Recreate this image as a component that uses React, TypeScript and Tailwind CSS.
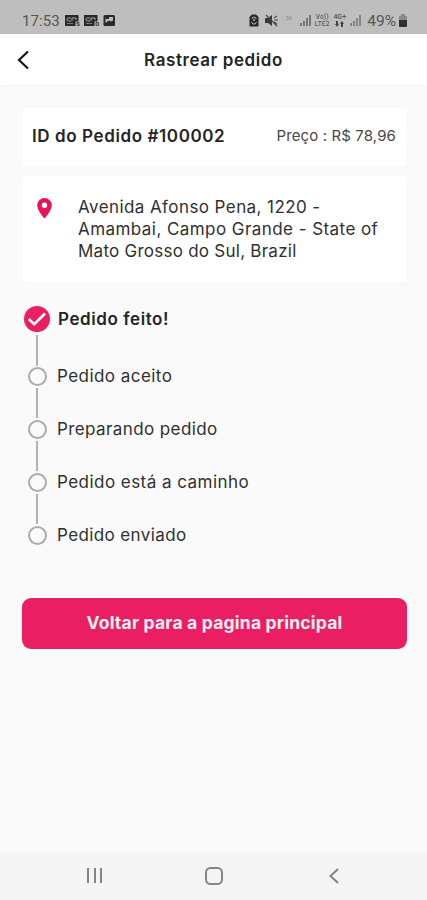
import React from "react";

const steps = [
  { label: "Pedido aceito", tracking: "tracking-[0.45px]" },
  { label: "Preparando pedido", tracking: "tracking-[0.4px]" },
  { label: "Pedido está a caminho", tracking: "tracking-[0.46px]" },
  { label: "Pedido enviado", tracking: "tracking-[0.39px]" },
];

function CardsIcon({ badge }: { badge: string }) {
  return (
    <svg width="16" height="13" viewBox="0 0 16 13" className="shrink-0">
      <path d="M0 1h13.500v6.500h-3V12H0z" fill="#292929" />
      <path d="M6 4H3.300q-1.300 0-1.300 1.500T3.300 7H6M7 7V4h4v2" stroke="#aaa" fill="none" />
      <path d="M2 9.500h6" stroke="#777" />
      <text x="11.300" y="12" fontSize="7" fontWeight="700" fill="#333" fontFamily="Roboto">{badge}</text>
    </svg>
  );
}

function Signal({ color }: { color: string }) {
  return (
    <svg width="12" height="13" viewBox="0 0 12 13" className="shrink-0" fill={color}>
      <path d="M0 9h2v3H0zM3 7h2v5H3zM6 4h2v8H6zM9 1h2v11H9z" />
    </svg>
  );
}

function StatusBar() {
  return (
    <div className="flex h-[34px] items-center bg-[#bebebe] pt-[7px] pl-[22px] pr-[19px] font-[Roboto,sans-serif] text-[#555]">
      <span className="w-[43px] text-[15px] leading-[14px] tracking-[0.1px]">17:53</span>
      <div className="flex gap-[3px]">
        <CardsIcon badge="s" />
        <CardsIcon badge="o" />
        <svg width="13" height="13" viewBox="0 0 13 13">
          <rect x="0.500" y="1" width="11.500" height="11" rx="1.500" fill="#292929" />
          <path d="M2.500 3H10v3.500L8 7.500 6 6.500 2.500 9z" fill="#bebebe" />
          <path d="M2.500 3H6v2H2.500z" fill="#292929" />
        </svg>
      </div>
      <div className="ml-auto flex items-center">
        <svg width="10" height="13" viewBox="0 0 10 13" className="mr-[6px]">
          <path d="M3 .5h4L9.500 3v9.500h-9V3z" fill="#272727" />
          <path d="M3 5q0-2 2-2t2 2M2.500 8L4 10h2l1.500-2" stroke="#bbb" fill="none" />
          <circle cx="5" cy="6" r="1" fill="#bbb" />
        </svg>
        <svg width="14" height="13" viewBox="0 0 14 13" className="mr-[6px]">
          <path d="M0 4h3l4-3v11L3 9H0z" fill="#3a3a3a" />
          <path d="M1 1l11 11M9 4l3-2M9 6h4M9 8l3 2" stroke="#4a4a4a" strokeWidth="1.200" />
        </svg>
        <span className="mr-[8px] h-[12px] text-[6px] leading-[6px] text-[#888]">36</span>
        <Signal color="#777" />
        <div className="ml-px flex w-[18px] flex-col items-center text-[6.500px] leading-[7px] font-medium tracking-[0.2px] text-[#5f5f5f]">
          <span>Vo))</span>
          <span>LTE2</span>
        </div>
        <div className="mr-[4px] ml-[2px] flex w-[13px] flex-col items-center text-[7px] leading-[7px] font-medium">
          <span>4G+</span>
          <svg width="9" height="6" viewBox="0 0 9 6" fill="#444">
            <path d="M0 3h1V0h2v3h1L2 6zM5 3l2-3 2 3H8v3H6V3z" />
          </svg>
        </div>
        <Signal color="#858585" />
        <span className="ml-[5px] text-[15.500px] leading-[14px]">49%</span>
        <svg width="10" height="13" viewBox="0 0 10 13" className="ml-[2px]">
          <path d="M3 0h4v2h2v10q0 1-1 1H2q-1 0-1-1V2h2z" fill="#8b8b8b" />
          <path d="M1 6h8v6q0 1-1 1H2q-1 0-1-1z" fill="#303030" />
        </svg>
      </div>
    </div>
  );
}

export default function App() {
  return (
    <div className="flex h-[900px] w-[427px] flex-col bg-[#fafafa] font-[Inter,sans-serif] whitespace-nowrap text-[#252525]">
      <StatusBar />
      <header className="grid h-[51px] grid-cols-[60px_1fr_60px] items-center bg-white shadow-[0_1px_3px_rgba(0,0,0,0.02)]">
        <svg width="14" height="20" viewBox="0 0 14 20" className="ml-[16px]" fill="none" stroke="#161616" strokeWidth="2.200">
          <path d="M12 1.500L3 10l9 8.500" />
        </svg>
        <h1 className="text-center text-[17px] leading-[22px] font-semibold tracking-[0.58px]">Rastrear pedido</h1>
      </header>

      <main className="flex flex-col pr-[20px] pl-[22px] pt-[23px]">
        <section className="flex h-[58px] items-center justify-between rounded-[4px] bg-white pr-[11px] pb-[2px] pl-[10px] shadow-[0_0_4px_rgba(0,0,0,0.025)]">
          <h2 className="text-[17px] leading-[22px] font-semibold tracking-[0.6px]">ID do Pedido #100002</h2>
          <span className="text-[15px] tracking-[0.12px] text-[#484848]">Preço : R$ 78,96</span>
        </section>

        <section className="mt-[10px] flex h-[106px] rounded-[4px] bg-white pt-[20px] pl-[15px] shadow-[0_0_4px_rgba(0,0,0,0.025)]">
          <svg width="15" height="21" viewBox="0 0 15 21" className="mt-[2px] mr-[26px]">
            <path d="M7.500 0A7.300 7.300 0 0 0 .2 7.300C.2 12.800 7.500 20.500 7.500 20.500s7.300-7.700 7.300-13.200A7.300 7.300 0 0 0 7.500 0zm0 10a2.700 2.700 0 1 1 0-5.400 2.700 2.700 0 0 1 0 5.400z" fill="#e7145c" />
          </svg>
          <p className="flex flex-col text-[17px] leading-[22px] text-[#303030]">
            <span className="tracking-[0.42px]">Avenida Afonso Pena, 1220 -</span>
            <span className="tracking-[0.44px]">Amambai, Campo Grande - State of</span>
            <span className="tracking-[0.25px]">Mato Grosso do Sul, Brazil</span>
          </p>
        </section>

        <ol className="mt-[24px] flex flex-col">
          <li className="flex h-[61px] items-start">
            <div className="flex w-[30px] shrink-0 flex-col items-center">
              <svg width="26" height="26" viewBox="0 0 26 26">
                <circle cx="13" cy="13" r="13" fill="#e91e63" />
                <path d="M4.800 13l5.400 5.200L21 7.500" stroke="white" strokeWidth="2.600" fill="none" />
              </svg>
              <span className="mt-[3px] h-[31px] w-[2px] bg-[#b2b2b2]" />
            </div>
            <span className="ml-[6px] text-[17px] leading-[26px] font-semibold tracking-[0.58px]">Pedido feito!</span>
          </li>
          {steps.map((s, i) => (
            <li key={s.label} className="flex h-[53px] items-start">
              <div className="flex w-[30px] shrink-0 flex-col items-center">
                <span className="size-[19px] rounded-full border-2 border-[#acacac]" />
                {i < 3 && <span className="mt-[2px] h-[30px] w-[2px] bg-[#b2b2b2]" />}
              </div>
              <span className={"ml-[5px] text-[17px] leading-[19px] text-[#303030] " + s.tracking}>{s.label}</span>
            </li>
          ))}
        </ol>

        <button className="mt-[19px] h-[51px] rounded-[9px] bg-[#e91e63] text-[17.500px] font-bold tracking-[0.2px] text-[#fff0f5]">
          Voltar para a pagina principal
        </button>
      </main>

      <nav className="mt-auto flex h-[48px] items-center bg-[#f5f5f5]">
        <svg width="18" height="18" viewBox="0 0 18 18" className="ml-[86px]" stroke="#858585" strokeWidth="2">
          <path d="M2 1v15M9 1v15M15 1v15" />
        </svg>
        <svg width="20" height="20" viewBox="0 0 20 20" className="ml-[100px]" fill="none" stroke="#858585" strokeWidth="2">
          <rect x="2" y="2" width="16" height="16" rx="4.500" />
        </svg>
        <svg width="12" height="18" viewBox="0 0 12 18" className="ml-[104px]" fill="none" stroke="#858585" strokeWidth="2">
          <path d="M10 2L2.500 9l7.500 7" />
        </svg>
      </nav>
    </div>
  );
}
